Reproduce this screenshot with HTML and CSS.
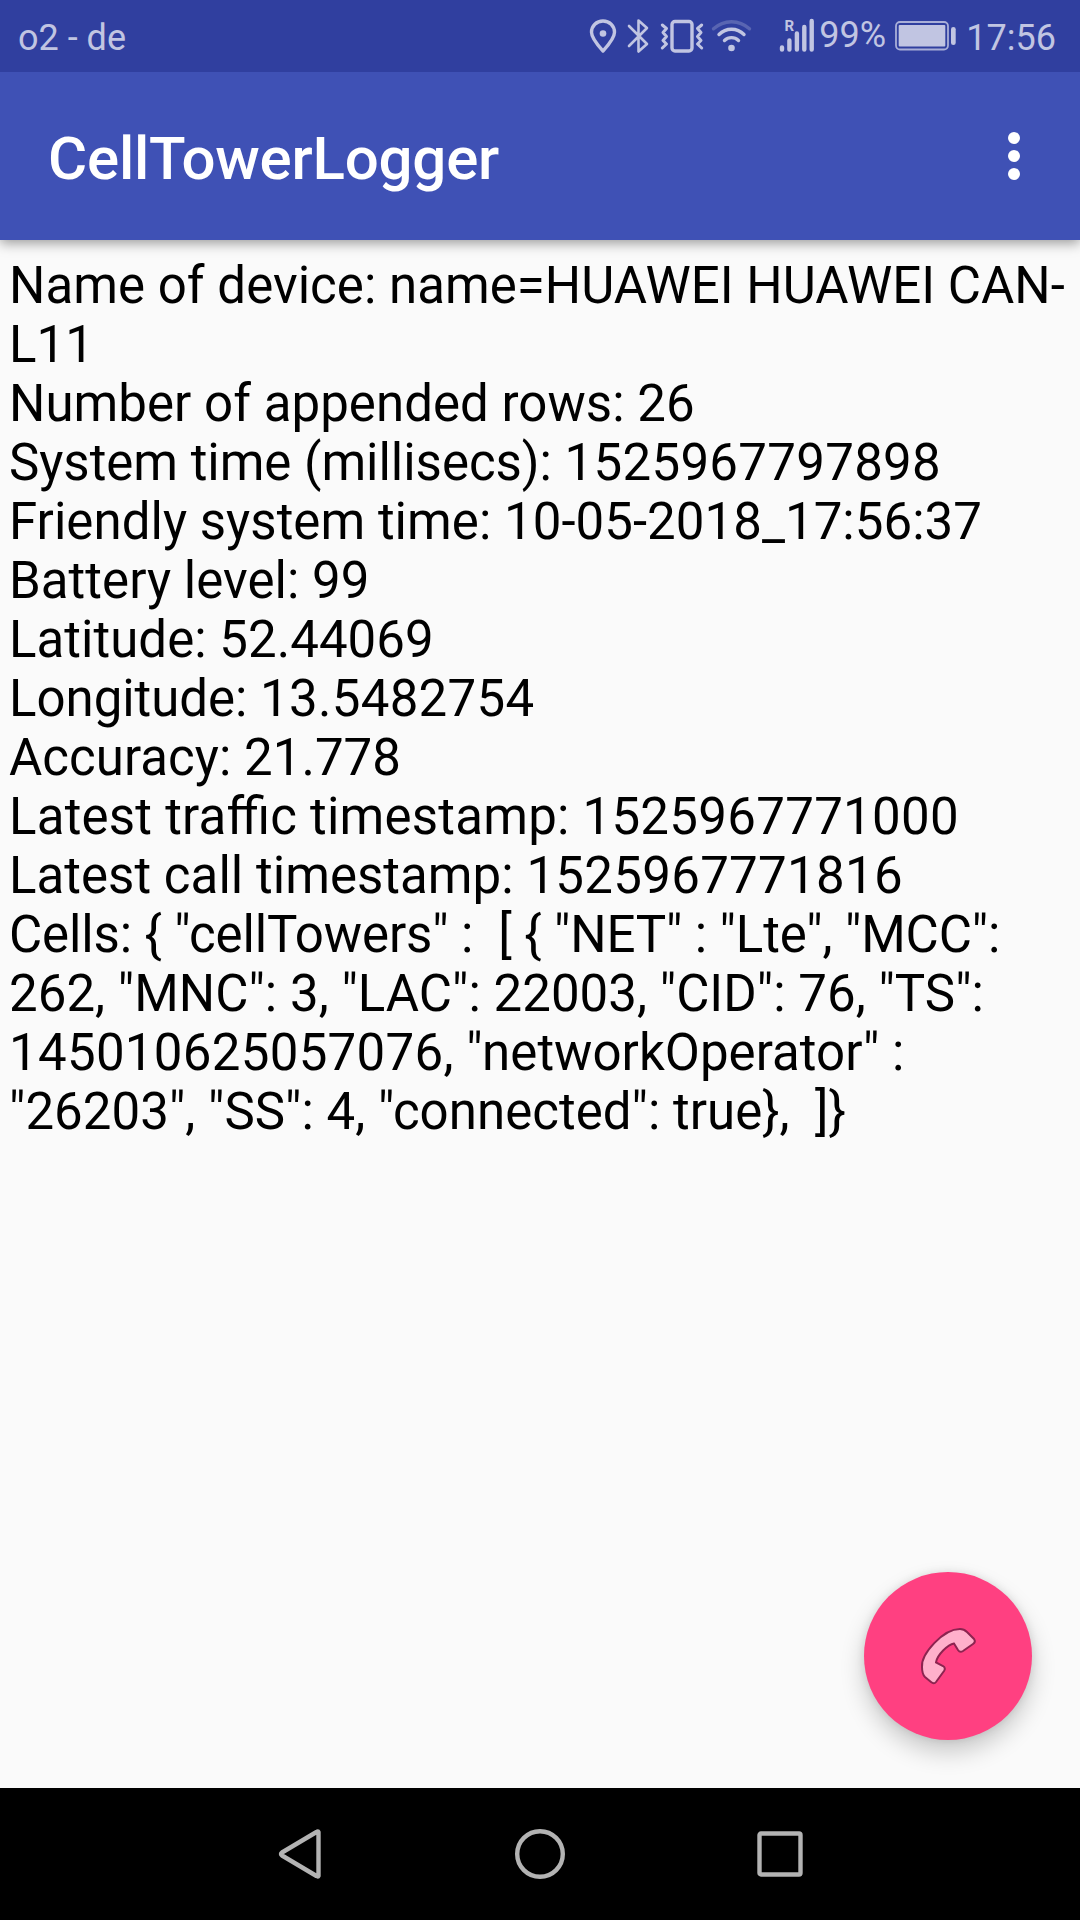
FILE: index.html
```html
<!DOCTYPE html>
<html lang="en">
<head>
<meta charset="utf-8">
<title>CellTowerLogger</title>
<link rel="stylesheet" href="styles.css">
</head>
<body>
<div class="phone">
  <div class="status">
    <span class="carrier">o2 - de</span>
    <div class="status-right">
      <svg class="pin" width="28" height="36" viewBox="0 0 28 36"><path d="M14 3C7.500 3 2.500 8 2.500 14.300C2.500 20.500 9 27.500 14 33C19 27.500 25.500 20.500 25.500 14.300C25.500 8 20.500 3 14 3Z" class="line"/><circle cx="14" cy="15.500" r="3.300" class="solid"/></svg>
      <svg class="bluetooth" width="23" height="36" viewBox="0 0 23 36"><path d="M2 8L20 26L11.500 33.500V2.500L20 10L2 28" class="line bt"/></svg>
      <svg class="vibrate" width="44" height="36" viewBox="0 0 44 36"><rect x="12" y="3.500" width="20" height="29.500" rx="3" class="line"/><path d="M2.300 7L6.500 10.500L3 14.500L6.500 18.500L3 22.500L6.500 26L2.300 30M41.700 7L37.500 10.500L41 14.500L37.500 18.500L41 22.500L37.500 26L41.700 30" class="line buzz"/></svg>
      <svg class="wifi" width="41" height="36" viewBox="0 0 41 36"><path d="M2.500 10.800C13 1.300 28 1.300 38.500 10.800" class="line dim"/><path d="M8 16.500C15 9.500 26 9.500 33 16.500M13.500 22.500C17.500 18.700 23.500 18.700 27.500 22.500" class="line"/><circle cx="20.500" cy="30" r="3.300" class="solid"/></svg>
      <svg class="signal" width="37" height="36" viewBox="0 0 37 36"><text x="6.500" y="13" class="roaming">R</text><path d="M4 29.500V31.500M11.400 22.500V31.500M18.900 15.500V31.500M26.300 9V31.500M33.700 3V31.500" class="bars"/></svg>
      <span class="percent">99%</span>
      <svg class="battery" width="62" height="30" viewBox="0 0 62 30"><rect x="1" y="1" width="52" height="27.500" rx="4" class="case"/><rect x="3.700" y="4" width="46.600" height="21.500" rx="1" class="solid"/><rect x="56" y="6" width="4.700" height="18" rx="2.300" class="solid"/></svg>
      <span class="clock">17:56</span>
    </div>
  </div>
  <header class="appbar">
    <h1 class="title">CellTowerLogger</h1>
    <svg class="more" width="12" height="48" viewBox="0 0 12 48"><circle cx="6" cy="6" r="6"/><circle cx="6" cy="24" r="6"/><circle cx="6" cy="42" r="6"/></svg>
  </header>
  <main class="content">
    <p class="row">Name of device: name=HUAWEI HUAWEI CAN-<br>L11</p>
    <p class="row">Number of appended rows: 26</p>
    <p class="row tight">System time (millisecs): <span class="digits">1525967797898</span></p>
    <p class="row">Friendly system time: 10-05-2018_17:56:37</p>
    <p class="row">Battery level: 99</p>
    <p class="row">Latitude: 52.44069</p>
    <p class="row tight">Longitude: <span class="digits">13.5482754</span></p>
    <p class="row">Accuracy: 21.778</p>
    <p class="row"><span class="label">Latest traffic timestamp: </span><span class="digits">1525967771000</span></p>
    <p class="row">Latest call timestamp: <span class="digits">1525967771816</span></p>
    <p class="row"><span class="json">Cells: { "cellTowers" :  [ { "NET" : "Lte", "MCC":</span><br>262, "MNC": 3, "LAC": 22003, "CID": 76, "TS":<br><span class="digits">145010625057076</span>, "networkOperator" :<br>"26203", "SS": 4, "connected": true},  ]}</p>
    <button class="fab" aria-label="Call">
      <svg width="60" height="60" viewBox="0 0 60 60"><path d="M3 41C2 28 24 3 41 3Q45 3 48 6L55 13Q57 16 54 18L44 25Q41 27 39 24L35 17.500C29 18.500 18 29 17 36.500L24 40Q27 42 25 45L17 56Q15 58.500 12 56L6 51Q3 48 3 41Z" class="handset"/></svg>
    </button>
  </main>
  <nav class="navbar">
    <svg width="44" height="52" viewBox="0 0 44 52"><path d="M40.500 4.200V47.800Q40 49 38.500 48L4 27.500Q2 26 4 24.500L38.500 4Q40 3 40.500 4.200Z"/></svg>
    <svg width="52" height="52" viewBox="0 0 52 52"><circle cx="26" cy="26" r="22.800"/></svg>
    <svg width="46" height="46" viewBox="0 0 46 46"><rect x="2.500" y="2.500" width="41" height="41" rx="1.500"/></svg>
  </nav>
</div>
</body>
</html>
```
FILE: styles.css
```css
* { box-sizing: border-box; }
body { margin: 0; font-family: Roboto, sans-serif; }
.phone { width: 1080px; height: 1920px; display: flex; flex-direction: column; overflow: hidden; background: #fafafa; }

.status { height: 72px; flex: none; position: relative; z-index: 2; padding: 0 24px 0 18px; background: #303f9f; color: #c1c5e2; font-size: 36px; line-height: 42px; display: flex; justify-content: space-between; align-items: flex-start; }
.carrier { padding-top: 17px; }
.status-right { display: flex; align-items: flex-start; padding-top: 18px; }
.pin { margin-right: 10px; }
.bluetooth { margin-right: 10px; }
.vibrate { margin-right: 7px; }
.wifi { margin-right: 26px; }
.signal { margin-right: 4px; }
.percent { margin-top: -4px; width: 76px; }
.battery { margin: 3px 9px 0 0; }
.clock { margin-top: -1px; }
.line { fill: none; stroke: #c1c5e2; stroke-width: 3.4; stroke-linecap: round; stroke-linejoin: round; }
.bt { stroke-width: 2.6; }
.buzz { stroke-width: 3; }
.dim { stroke: #5965b2; }
.solid { fill: #c1c5e2; }
.bars { fill: none; stroke: #c1c5e2; stroke-width: 4.4; stroke-linecap: round; }
.roaming { font: 700 15px Roboto, sans-serif; fill: #c1c5e2; }
.case { fill: none; stroke: #a9afd8; stroke-width: 1.8; }

.appbar { height: 168px; flex: none; padding: 0 60px 0 48px; background: #3f51b5; color: #fff; display: flex; align-items: center; justify-content: space-between; position: relative; box-shadow: 0 3px 12px rgba(0, 0, 0, .4); z-index: 1; }
.title { margin: 0; padding-top: 5px; font-size: 60px; font-weight: 500; line-height: 70px; letter-spacing: -.2px; }
.more { fill: #fff; }

.content { flex: 1; position: relative; padding: 16px 9px 0; color: #000; }
.row { margin: 0; font-size: 51px; line-height: 59px; letter-spacing: .04px; white-space: pre; }
.tight { letter-spacing: -.03px; }
.digits { letter-spacing: .3px; }
.label { letter-spacing: .22px; font-feature-settings: "liga" 1; }
.json { letter-spacing: -.12px; }
.fab { position: absolute; right: 48px; bottom: 48px; width: 168px; height: 168px; padding: 0; border: 0; border-radius: 50%; background: #ff4081; box-shadow: 0 12px 24px rgba(0, 0, 0, .2), 0 0 8px rgba(0, 0, 0, .1); display: flex; align-items: center; justify-content: center; }
.fab svg { margin-left: 2px; }
.handset { fill: #ffb0cb; stroke: #8c2450; stroke-width: 2; }

.navbar { height: 132px; flex: none; background: #000; padding: 0 277px 0 278px; display: flex; align-items: center; justify-content: space-between; }
.navbar svg { fill: none; stroke: #b3b3b3; stroke-width: 4.4; stroke-linejoin: round; }
```
